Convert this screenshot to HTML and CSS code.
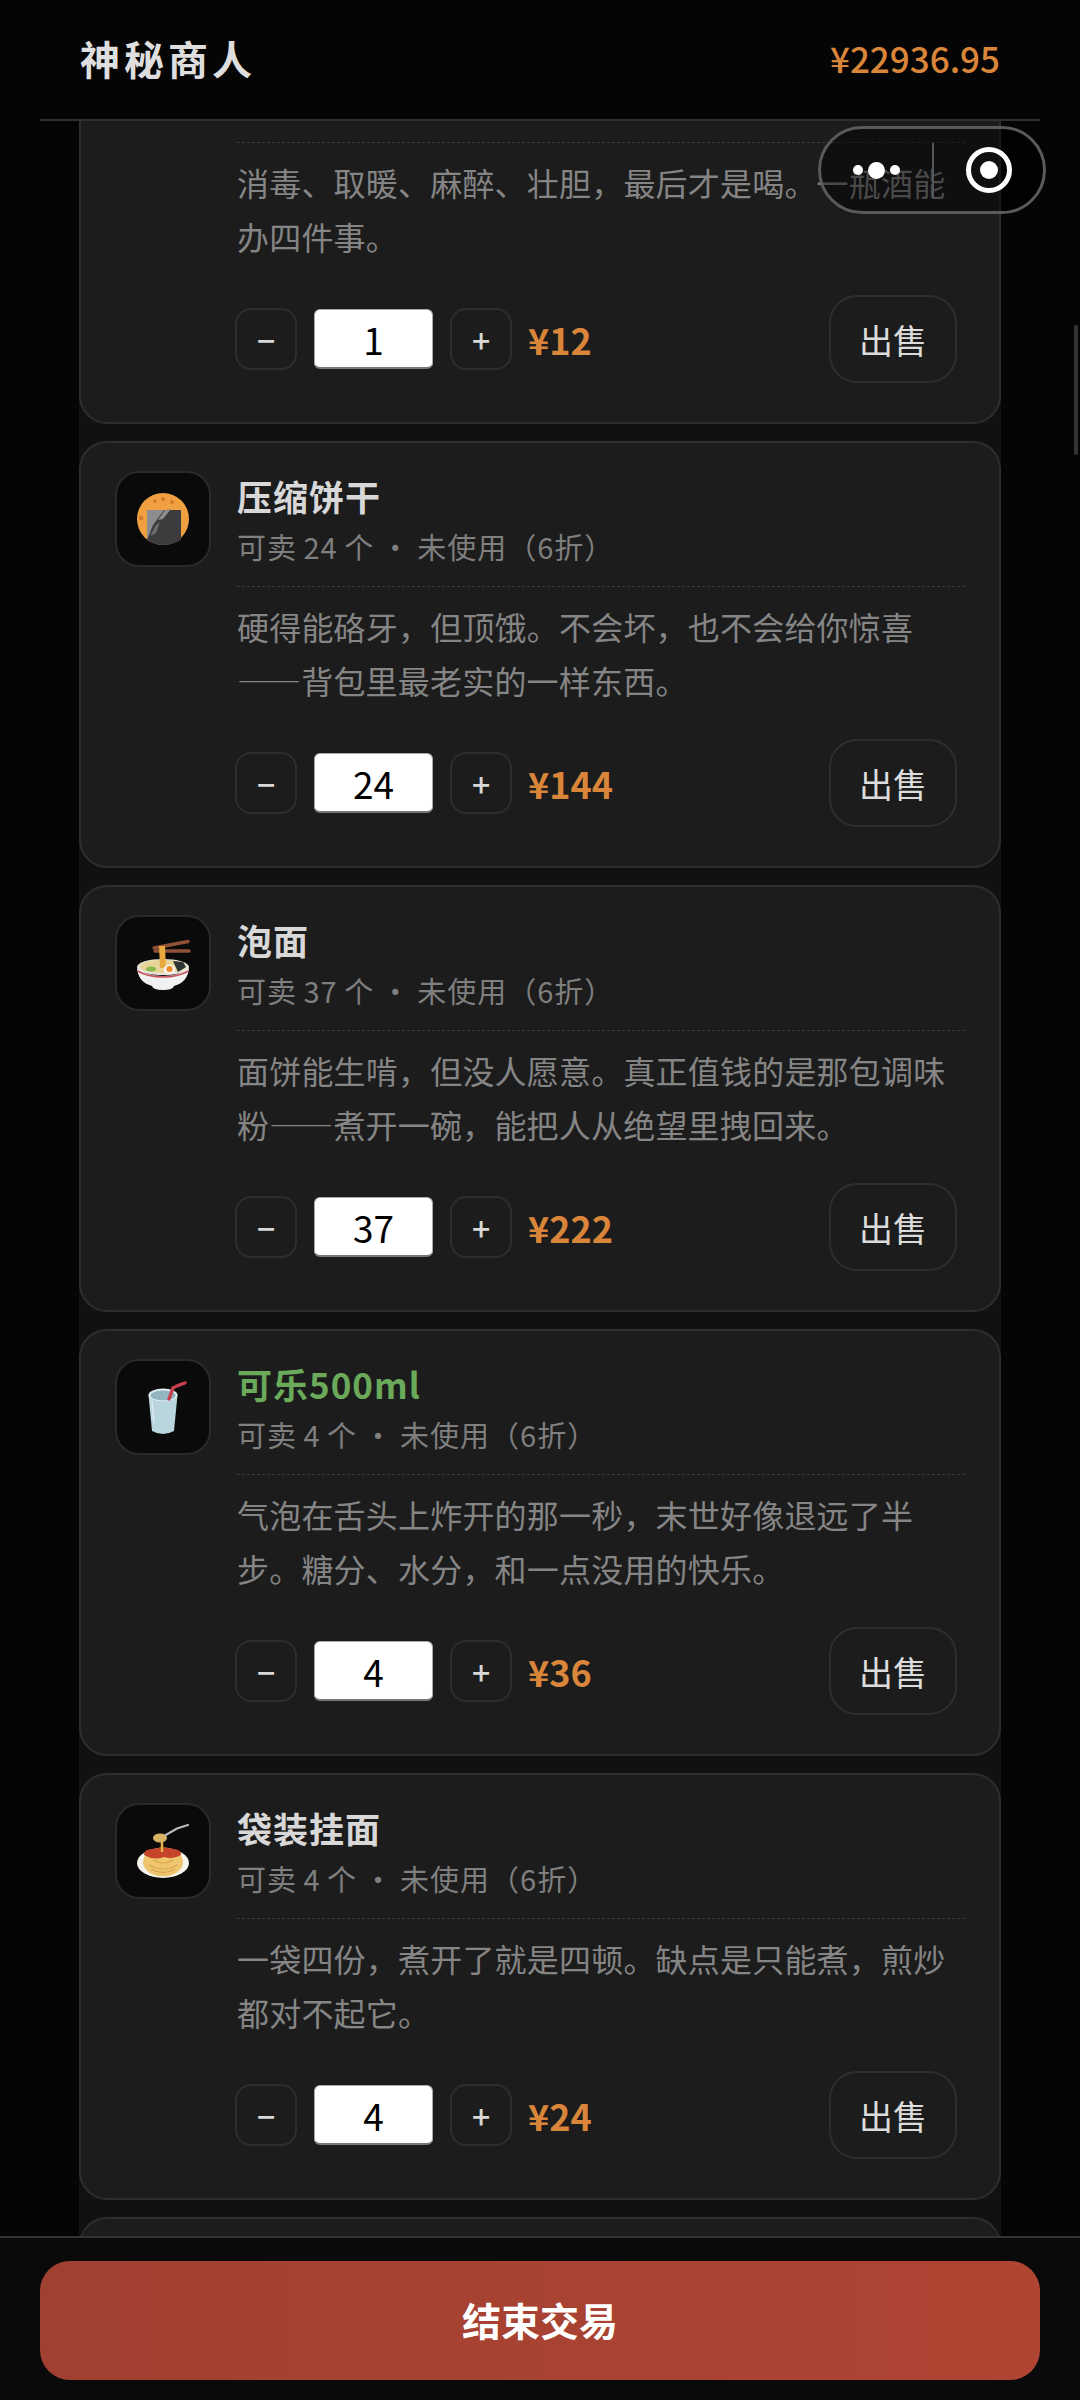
FILE: index.html
```html
<!DOCTYPE html>
<html lang="zh-CN">
<head>
  <meta charset="UTF-8" />
  <title>神秘商人</title>
  <link rel="stylesheet" href="styles.css">
</head>
<body>
  <div class="page">

    <header class="topbar">
      <h1>神秘商人</h1>
      <span class="money">¥22936.95</span>
    </header>

    <!-- Goods list, scrolled a little -->
    <main class="content">
      <div class="list">

        <div class="card">
          <div class="info">
            <div class="text"></div>
          </div>
          <p class="desc">消毒、取暖、麻醉、壮胆，最后才是喝。一瓶酒能办四件事。</p>
          <div class="actions">
            <button class="step">−</button>
            <input class="qty" value="1" />
            <button class="step">+</button>
            <span class="total">¥12</span>
            <button class="sell">出售</button>
          </div>
        </div>

        <div class="card">
          <div class="info">
            <div class="icon">
              <svg viewBox="0 0 64 64" width="64" height="64">
                <circle cx="32" cy="32" r="26" fill="#f0a040"/>
                <circle cx="24" cy="14" r="1.8" fill="#d07a28"/>
                <circle cx="32" cy="12" r="2" fill="#d07a28"/>
                <circle cx="41" cy="15" r="2" fill="#d07a28"/>
                <circle cx="10" cy="31" r="2.2" fill="#d07a28"/>
                <path d="M16 23H50V53Q42 58 32 58Q24 58 16 53Z" fill="#3c3c3e"/>
                <path d="M16 23H33L22 38L16 53Z" fill="#8d8d90"/>
                <path d="M34 23L40 22L32 32L27 33Z" fill="#8d8d90"/>
                <path d="M25 38L29 35L25 46L19 49Z" fill="#6d6d70"/>
              </svg>
            </div>
            <div class="text">
              <div class="name">压缩饼干</div>
              <div class="sub">可卖 24 个 · 未使用（6折）</div>
            </div>
          </div>
          <p class="desc">硬得能硌牙，但顶饿。不会坏，也不会给你惊喜——背包里最老实的一样东西。</p>
          <div class="actions">
            <button class="step">−</button>
            <input class="qty" value="24" />
            <button class="step">+</button>
            <span class="total">¥144</span>
            <button class="sell">出售</button>
          </div>
        </div>

        <div class="card">
          <div class="info">
            <div class="icon">
              <svg viewBox="0 0 64 64" width="64" height="64">
                <path d="M23 17L57 10.5" stroke="#8f5236" stroke-width="3.4" stroke-linecap="round"/>
                <path d="M24 20H58" stroke="#8f5236" stroke-width="3.4" stroke-linecap="round"/>
                <ellipse cx="32" cy="36" rx="26" ry="8" fill="#e9e4da"/>
                <ellipse cx="32" cy="35.5" rx="23" ry="6.5" fill="#e6d596"/>
                <path d="M28 15H34L35 37H29Z" fill="#e8a83e"/>
                <ellipse cx="20" cy="38" rx="5" ry="2.5" fill="#86b84e"/>
                <path d="M42 30L52 31L55 36L47 41Z" fill="#2c3436"/>
                <ellipse cx="38.5" cy="38.5" rx="6" ry="5" fill="#f6f2e8"/>
                <circle cx="38.5" cy="38" r="3" fill="#ec8a2a"/>
                <path d="M6 37Q16 45 32 45Q48 45 58 37Q57 51 43 55Q42 59 32 59Q22 59 21 55Q7 51 6 37Z" fill="#f1f1f1"/>
                <path d="M6.500 40Q17 46 32 46Q47 46 57.500 40" stroke="#c8505a" stroke-width="1.600" fill="none"/>
              </svg>
            </div>
            <div class="text">
              <div class="name">泡面</div>
              <div class="sub">可卖 37 个 · 未使用（6折）</div>
            </div>
          </div>
          <p class="desc">面饼能生啃，但没人愿意。真正值钱的是那包调味粉——煮开一碗，能把人从绝望里拽回来。</p>
          <div class="actions">
            <button class="step">−</button>
            <input class="qty" value="37" />
            <button class="step">+</button>
            <span class="total">¥222</span>
            <button class="sell">出售</button>
          </div>
        </div>

        <div class="card">
          <div class="info">
            <div class="icon">
              <svg viewBox="0 0 64 64" width="64" height="64">
                <path d="M17.500 20L21 56Q32 62 43 56L46.500 20Z" fill="#b9d6df"/>
                <ellipse cx="32" cy="20" rx="14.500" ry="6.500" fill="#e2eef1"/>
                <ellipse cx="32" cy="20.500" rx="12.500" ry="5" fill="#94b6c2"/>
                <path d="M38 24L42 13Q46 10.500 54 8" stroke="#c8404e" stroke-width="3.400" stroke-linecap="round" fill="none"/>
                <path d="M21 26L23 48" stroke="#dcebef" stroke-width="1.500"/>
              </svg>
            </div>
            <div class="text">
              <div class="name rare">可乐500ml</div>
              <div class="sub">可卖 4 个 · 未使用（6折）</div>
            </div>
          </div>
          <p class="desc">气泡在舌头上炸开的那一秒，末世好像退远了半步。糖分、水分，和一点没用的快乐。</p>
          <div class="actions">
            <button class="step">−</button>
            <input class="qty" value="4" />
            <button class="step">+</button>
            <span class="total">¥36</span>
            <button class="sell">出售</button>
          </div>
        </div>

        <div class="card">
          <div class="info">
            <div class="icon">
              <svg viewBox="0 0 64 64" width="64" height="64">
                <ellipse cx="32" cy="44" rx="26" ry="15" fill="#f6f4ee"/>
                <ellipse cx="32" cy="43" rx="20" ry="14.500" fill="#efc670"/>
                <path d="M18 46Q32 54 46 46M20 50Q32 57 44 50M22 41Q32 47 42 41" stroke="#d9a548" stroke-width="1.200" fill="none"/>
                <path d="M13 36Q13 30 21 30Q32 27 43 30Q51 31 50 36Q42 41 33 38Q23 42 13 36Z" fill="#c4452a"/>
                <path d="M31 21V33" stroke="#e8b24e" stroke-width="2.500"/>
                <path d="M33 17L46 9.500L57 6" stroke="#b4b8bc" stroke-width="2.200" stroke-linecap="round" fill="none"/>
                <ellipse cx="29" cy="19" rx="7" ry="4.500" fill="#d8b466"/>
              </svg>
            </div>
            <div class="text">
              <div class="name">袋装挂面</div>
              <div class="sub">可卖 4 个 · 未使用（6折）</div>
            </div>
          </div>
          <p class="desc">一袋四份，煮开了就是四顿。缺点是只能煮，煎炒都对不起它。</p>
          <div class="actions">
            <button class="step">−</button>
            <input class="qty" value="4" />
            <button class="step">+</button>
            <span class="total">¥24</span>
            <button class="sell">出售</button>
          </div>
        </div>

        <div class="card"></div>

      </div>
    </main>

    <footer class="bottombar">
      <button class="finish">结束交易</button>
    </footer>

    <!-- Mini program capsule and scrollbar lie over the page -->
    <div class="capsule">
      <span class="dots"><i></i><i class="big"></i><i></i></span>
      <span class="split"></span>
      <span class="target"><i></i></span>
    </div>
    <div class="scrollbar"></div>

  </div>
</body>
</html>
```

FILE: styles.css
```css
* { box-sizing: border-box; font-family: 'Noto Sans CJK SC', 'Noto Sans', sans-serif; }
body { margin: 0; background: #050505; }

.page {
  position: relative;
  width: 1080px;
  height: 2400px;
  display: flex;
  flex-direction: column;
  overflow: hidden;
  background: #050505;
}

/* Header */
.topbar {
  height: 121px;
  margin: 0 40px;
  padding: 0 40px 4px;
  display: flex;
  align-items: center;
  justify-content: space-between;
  border-bottom: 2px solid #303030;
}
.topbar h1 {
  margin: 0;
  font-size: 40px;
  font-weight: 700;
  letter-spacing: 4px;
  color: #dedede;
}
.money {
  font-size: 35px;
  font-weight: 500;
  color: #d9853a;
}

/* List */
.content {
  flex: 1;
  min-height: 0;
  margin: 0 79px;
  overflow: hidden;
  background: #111;
}
.list {
  margin-top: -124px;
  display: flex;
  flex-direction: column;
  gap: 17px;
}
.card {
  height: 427px;
  padding: 28px 34px 0;
  background: #1c1c1c;
  border: 2px solid #2e2e2e;
  border-radius: 28px;
}
.info {
  display: flex;
  justify-content: flex-end;
  gap: 26px;
}
.icon {
  width: 96px;
  height: 96px;
  flex: none;
  display: flex;
  align-items: center;
  justify-content: center;
  background: #0a0a0a;
  border: 2px solid #2a2a2a;
  border-radius: 24px;
}
.text {
  width: 728px;
  height: 116px;
  border-bottom: 1px dashed #3a3a3a;
}
.name {
  font-size: 35px;
  font-weight: 700;
  letter-spacing: 1px;
  line-height: 50px;
  color: #d8d8d8;
}
.name.rare { color: #6aaa5a; }
.sub {
  margin-top: 2px;
  font-size: 29px;
  line-height: 46px;
  letter-spacing: 1px;
  word-spacing: -1px;
  color: #7f7f7f;
}
.desc {
  margin: 12px 0 0 122px;
  font-size: 32px;
  line-height: 54px;
  letter-spacing: 0.200px;
  color: #858585;
}

/* Qty row */
.actions {
  margin: 32px 8px 0 120px;
  height: 88px;
  display: flex;
  align-items: center;
}
.step {
  width: 62px;
  height: 62px;
  padding: 0;
  background: none;
  border: 2px solid #2e2e2e;
  border-radius: 16px;
  font-size: 32px;
  font-weight: 500;
  color: #d8d8d8;
}
.qty {
  width: 119px;
  height: 60px;
  margin: 0 17px;
  padding: 0;
  background: #fff;
  border: 1px solid #aaa;
  border-bottom: 2px solid #777;
  border-radius: 6px;
  text-align: center;
  font-size: 37px;
  color: #000;
}
.total {
  margin-left: 16px;
  font-size: 36px;
  font-weight: 700;
  color: #d9853a;
}
.sell {
  width: 128px;
  height: 88px;
  margin-left: auto;
  padding: 0;
  background: none;
  border: 2px solid #2e2e2e;
  border-radius: 28px;
  font-size: 34px;
  color: #dcdcdc;
}

/* Footer */
.bottombar {
  height: 164px;
  padding: 23px 40px 0;
  background: #0a0a0a;
  border-top: 2px solid #333;
}
.finish {
  width: 100%;
  height: 119px;
  padding: 0 0 3px;
  background: linear-gradient(to right, #a04030, #b04433);
  border: none;
  border-radius: 30px;
  font-size: 39px;
  font-weight: 700;
  color: #fff;
}

/* Overlays */
.capsule {
  position: absolute;
  left: 818px;
  top: 126px;
  width: 228px;
  height: 88px;
  display: flex;
  align-items: center;
  background: rgba(0,0,0,0.45);
  border: 3px solid #5a5a5a;
  border-radius: 44px;
}
.dots {
  width: 111px;
  display: flex;
  align-items: center;
  justify-content: center;
  gap: 3px;
}
.dots i {
  width: 10px;
  height: 10px;
  margin: 0 1px;
  background: #fff;
  border-radius: 50%;
}
.dots i.big { width: 17px; height: 17px; }
.split {
  width: 2px;
  height: 55px;
  background: #555;
}
.target {
  width: 46px;
  height: 46px;
  margin-left: 32px;
  display: flex;
  align-items: center;
  justify-content: center;
  border: 5px solid #fff;
  border-radius: 50%;
}
.target i {
  width: 18px;
  height: 18px;
  background: #fff;
  border-radius: 50%;
}
.scrollbar {
  position: absolute;
  left: 1074px;
  top: 325px;
  width: 4px;
  height: 130px;
  background: #333;
  border-radius: 2px;
}
```
